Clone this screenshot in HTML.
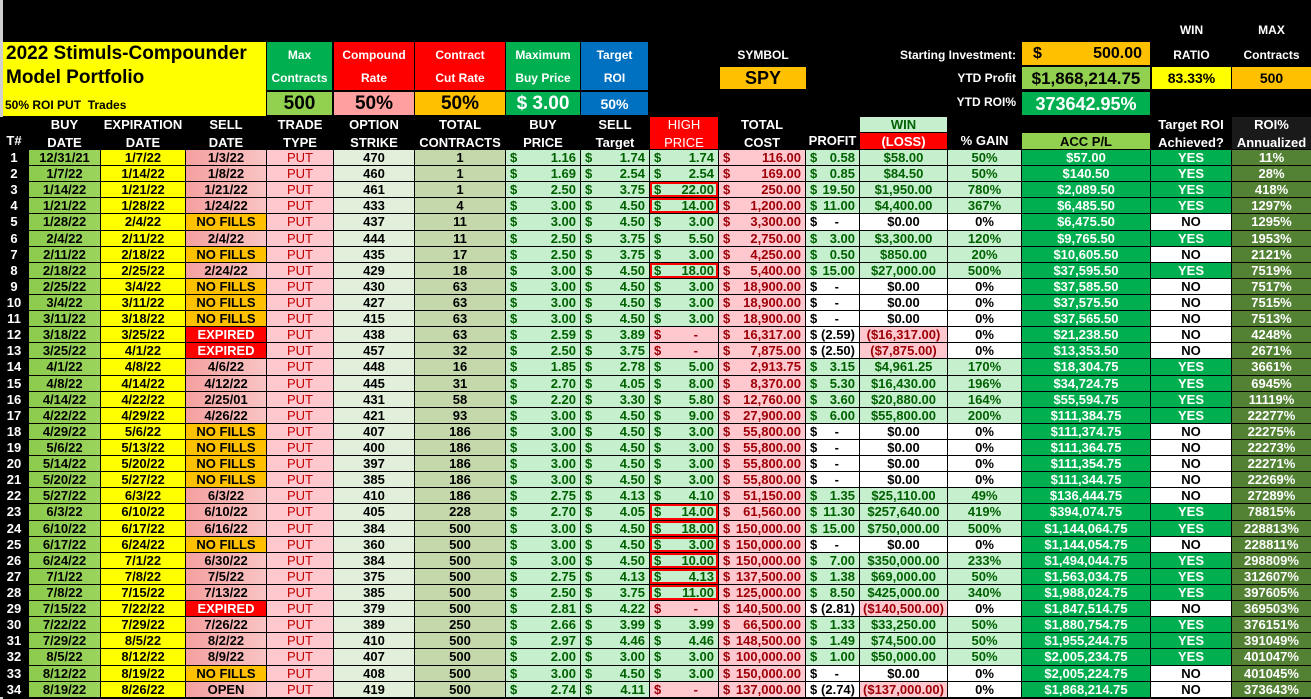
<!DOCTYPE html>
<html><head><meta charset="utf-8"><style>
*{margin:0;padding:0;box-sizing:border-box}
body{width:1311px;height:699px;background:#000;overflow:hidden;position:relative;font-family:"Liberation Sans Narrow","Liberation Sans",sans-serif;font-weight:bold;font-size:13px;color:#000}
.a{position:absolute;display:flex;align-items:center;justify-content:center;text-align:center;line-height:1}
.wt{color:#fff}
#g{position:absolute;left:0;top:117px;width:1311px;display:grid;grid-template-columns:28px 71px 84px 80px 66px 80px 90px 74px 68px 68px 86px 53px 87px 73px 128px 80px 79px;grid-template-rows:15px 16px repeat(34,15.12px);column-gap:1px;row-gap:1px;background:#000}
#g>div{display:flex;align-items:center;justify-content:center;white-space:nowrap;overflow:hidden;line-height:1}
.h{color:#fff;background:#000;flex-direction:column}
.m{justify-content:space-between!important;padding:0 4px}
.m b,.m i{font-weight:bold;font-style:normal}
.tn{color:#fff;background:#000}
.bd{background:linear-gradient(90deg,#8ccb4d,#9bd45c)}
.ex{background:#ffff00}
.sd{background:linear-gradient(90deg,#f4a09f,#f9c4c4)}
.nf{background:#ffc000}
.xp{background:#ff0000;color:#fff}
.tt{background:#ffc7ce;color:#c00000;font-weight:normal!important}
.st{background:#e2efda}
.ct{background:#c4d8ab}
.g{background:#c6efce;color:#006100}
.p{background:#ffc7ce;color:#9c0006}
.w{background:#fff;color:#000}
.ac{background:#00b050;color:#fff}
.ro{background:#548235;color:#fff}
.bx{box-shadow:inset 0 0 0 2px #ff0000}
.pd{padding-right:16px!important}
</style></head><body>
<div style="position:absolute;left:0;top:0;width:3px;height:699px;background:#d0d0d0"></div>
<!-- title -->
<div style="position:absolute;left:3px;top:42px;width:263px;height:74px;background:#ffff00"></div>
<div style="position:absolute;left:6px;top:43px;font-size:19px;line-height:22px;font-family:'Liberation Sans',sans-serif">2022 Stimuls-Compounder</div>
<div style="position:absolute;left:6px;top:67px;font-size:19px;line-height:22px;font-family:'Liberation Sans',sans-serif">Model Portfolio</div>
<div style="position:absolute;left:5px;top:98px;font-size:12px;line-height:14px">50% ROI PUT&nbsp; Trades</div>
<!-- param boxes -->
<div class="a wt" style="left:267px;top:42px;width:65px;height:48px;background:#00b050;flex-direction:column;gap:11px;font-size:12px"><span>Max</span><span>Contracts</span></div>
<div class="a wt" style="left:334px;top:42px;width:80px;height:48px;background:#ff0000;flex-direction:column;gap:11px;font-size:12px"><span>Compound</span><span>Rate</span></div>
<div class="a wt" style="left:415px;top:42px;width:90px;height:48px;background:#ff0000;flex-direction:column;gap:11px;font-size:12px"><span>Contract</span><span>Cut Rate</span></div>
<div class="a wt" style="left:506px;top:42px;width:74px;height:48px;background:#00b050;flex-direction:column;gap:11px;font-size:12px"><span>Maximum</span><span>Buy Price</span></div>
<div class="a wt" style="left:581px;top:42px;width:67px;height:48px;background:#0070c0;flex-direction:column;gap:11px;font-size:12px"><span>Target</span><span>ROI</span></div>
<div class="a" style="left:267px;top:92px;width:65px;height:23px;background:#92d050;font-size:19px">500</div>
<div class="a" style="left:334px;top:92px;width:80px;height:23px;background:#ff9f9f;font-size:19px">50%</div>
<div class="a" style="left:415px;top:92px;width:90px;height:23px;background:#ffc000;font-size:19px">50%</div>
<div class="a wt" style="left:506px;top:92px;width:74px;height:23px;background:#00b050;font-size:19px">$ 3.00</div>
<div class="a wt" style="left:581px;top:92px;width:67px;height:23px;background:#0070c0;font-size:14px">50%</div>
<!-- right top -->
<div class="a wt" style="left:720px;top:48px;width:86px;height:14px;font-size:12px">SYMBOL</div>
<div class="a" style="left:720px;top:67px;width:86px;height:22px;background:#ffc000;font-size:18px;font-family:'Liberation Sans',sans-serif">SPY</div>
<div class="a wt" style="left:880px;top:48px;width:136px;height:14px;font-size:12px;justify-content:flex-end">Starting Investment:</div>
<div class="a wt" style="left:880px;top:71px;width:136px;height:14px;font-size:12px;justify-content:flex-end">YTD Profit</div>
<div class="a wt" style="left:880px;top:95px;width:136px;height:14px;font-size:12px;justify-content:flex-end">YTD ROI%</div>
<div class="a" style="left:1022px;top:42px;width:128px;height:23px;background:#ffc000;font-size:16px;justify-content:space-between;padding:0 8px 0 11px"><span>$</span><span>500.00</span></div>
<div class="a" style="left:1022px;top:67px;width:128px;height:22px;background:#92d050;font-size:17px">$1,868,214.75</div>
<div class="a wt" style="left:1022px;top:92px;width:128px;height:23px;background:#00b050;font-size:18px">373642.95%</div>
<div class="a wt" style="left:1152px;top:23px;width:79px;height:14px;font-size:12px">WIN</div>
<div class="a wt" style="left:1152px;top:48px;width:79px;height:14px;font-size:12px">RATIO</div>
<div class="a wt" style="left:1232px;top:23px;width:79px;height:14px;font-size:12px">MAX</div>
<div class="a wt" style="left:1232px;top:48px;width:79px;height:14px;font-size:12px">Contracts</div>
<div class="a" style="left:1152px;top:67px;width:79px;height:22px;background:#ffff00;font-size:14px">83.33%</div>
<div class="a" style="left:1232px;top:67px;width:79px;height:22px;background:#ffc000;font-size:14px">500</div>

<div id="g">
<div class="h" style="grid-row:1/3;justify-content:flex-end;padding-bottom:2px">T#</div>
<div class="h" style="grid-row:1/3;gap:5px"><span>BUY</span><span>DATE</span></div>
<div class="h" style="grid-row:1/3;gap:5px"><span>EXPIRATION</span><span>DATE</span></div>
<div class="h" style="grid-row:1/3;gap:5px"><span>SELL</span><span>DATE</span></div>
<div class="h" style="grid-row:1/3;gap:5px"><span>TRADE</span><span>TYPE</span></div>
<div class="h" style="grid-row:1/3;gap:5px"><span>OPTION</span><span>STRIKE</span></div>
<div class="h" style="grid-row:1/3;gap:5px"><span>TOTAL</span><span>CONTRACTS</span></div>
<div class="h" style="grid-row:1/3;gap:5px"><span>BUY</span><span>PRICE</span></div>
<div class="h" style="grid-row:1/3;gap:5px"><span>SELL</span><span>Target</span></div>
<div class="h" style="grid-row:1/3;gap:5px;background:#ff0000;font-weight:normal"><span>HIGH</span><span>PRICE</span></div>
<div class="h" style="grid-row:1/3;gap:5px"><span>TOTAL</span><span>COST</span></div>
<div class="h" style="grid-row:1/3;justify-content:flex-end;padding-bottom:2px">PROFIT</div>
<div style="grid-row:1;background:#c6efce;color:#006100">WIN</div>
<div class="h" style="grid-row:1/3;justify-content:flex-end;padding-bottom:2px">% GAIN</div>
<div class="h" style="grid-row:1"></div>
<div class="h" style="grid-row:1/3;gap:5px"><span>Target ROI</span><span>Achieved?</span></div>
<div class="h" style="grid-row:1/3;gap:5px;background:#1a1a1a"><span>ROI%</span><span>Annualized</span></div>
<div style="grid-row:2;grid-column:13;background:#ff0000;color:#fff">(LOSS)</div>
<div style="grid-row:2;grid-column:15;background:#92d050">ACC P/L</div>

<div class="tn">1</div><div class="bd">12/31/21</div><div class="ex">1/7/22</div><div class="sd">1/3/22</div><div class="tt">PUT</div><div class="st">470</div><div class="ct">1</div><div class="g m"><b>$</b><i>1.16</i></div><div class="g m"><b>$</b><i>1.74</i></div><div class="g m"><b>$</b><i>1.74</i></div><div class="p m"><b>$</b><i>116.00</i></div><div class="g m"><b>$</b><i>0.58</i></div><div class="g">$58.00</div><div class="g">50%</div><div class="ac">$57.00</div><div class="ac">YES</div><div class="ro">11%</div>
<div class="tn">2</div><div class="bd">1/7/22</div><div class="ex">1/14/22</div><div class="sd">1/8/22</div><div class="tt">PUT</div><div class="st">460</div><div class="ct">1</div><div class="g m"><b>$</b><i>1.69</i></div><div class="g m"><b>$</b><i>2.54</i></div><div class="g m"><b>$</b><i>2.54</i></div><div class="p m"><b>$</b><i>169.00</i></div><div class="g m"><b>$</b><i>0.85</i></div><div class="g">$84.50</div><div class="g">50%</div><div class="ac">$140.50</div><div class="ac">YES</div><div class="ro">28%</div>
<div class="tn">3</div><div class="bd">1/14/22</div><div class="ex">1/21/22</div><div class="sd">1/21/22</div><div class="tt">PUT</div><div class="st">461</div><div class="ct">1</div><div class="g m"><b>$</b><i>2.50</i></div><div class="g m"><b>$</b><i>3.75</i></div><div class="g m bx"><b>$</b><i>22.00</i></div><div class="p m"><b>$</b><i>250.00</i></div><div class="g m"><b>$</b><i>19.50</i></div><div class="g">$1,950.00</div><div class="g">780%</div><div class="ac">$2,089.50</div><div class="ac">YES</div><div class="ro">418%</div>
<div class="tn">4</div><div class="bd">1/21/22</div><div class="ex">1/28/22</div><div class="sd">1/24/22</div><div class="tt">PUT</div><div class="st">433</div><div class="ct">4</div><div class="g m"><b>$</b><i>3.00</i></div><div class="g m"><b>$</b><i>4.50</i></div><div class="g m bx"><b>$</b><i>14.00</i></div><div class="p m"><b>$</b><i>1,200.00</i></div><div class="g m"><b>$</b><i>11.00</i></div><div class="g">$4,400.00</div><div class="g">367%</div><div class="ac">$6,485.50</div><div class="ac">YES</div><div class="ro">1297%</div>
<div class="tn">5</div><div class="bd">1/28/22</div><div class="ex">2/4/22</div><div class="nf">NO FILLS</div><div class="tt">PUT</div><div class="st">437</div><div class="ct">11</div><div class="g m"><b>$</b><i>3.00</i></div><div class="g m"><b>$</b><i>4.50</i></div><div class="g m"><b>$</b><i>3.00</i></div><div class="p m"><b>$</b><i>3,300.00</i></div><div class="w m"><b>$</b><i class="pd">-</i></div><div class="w">$0.00</div><div class="w">0%</div><div class="ac">$6,475.50</div><div class="w">NO</div><div class="ro">1295%</div>
<div class="tn">6</div><div class="bd">2/4/22</div><div class="ex">2/11/22</div><div class="sd">2/4/22</div><div class="tt">PUT</div><div class="st">444</div><div class="ct">11</div><div class="g m"><b>$</b><i>2.50</i></div><div class="g m"><b>$</b><i>3.75</i></div><div class="g m"><b>$</b><i>5.50</i></div><div class="p m"><b>$</b><i>2,750.00</i></div><div class="g m"><b>$</b><i>3.00</i></div><div class="g">$3,300.00</div><div class="g">120%</div><div class="ac">$9,765.50</div><div class="ac">YES</div><div class="ro">1953%</div>
<div class="tn">7</div><div class="bd">2/11/22</div><div class="ex">2/18/22</div><div class="nf">NO FILLS</div><div class="tt">PUT</div><div class="st">435</div><div class="ct">17</div><div class="g m"><b>$</b><i>2.50</i></div><div class="g m"><b>$</b><i>3.75</i></div><div class="g m"><b>$</b><i>3.00</i></div><div class="p m"><b>$</b><i>4,250.00</i></div><div class="g m"><b>$</b><i>0.50</i></div><div class="g">$850.00</div><div class="g">20%</div><div class="ac">$10,605.50</div><div class="w">NO</div><div class="ro">2121%</div>
<div class="tn">8</div><div class="bd">2/18/22</div><div class="ex">2/25/22</div><div class="sd">2/24/22</div><div class="tt">PUT</div><div class="st">429</div><div class="ct">18</div><div class="g m"><b>$</b><i>3.00</i></div><div class="g m"><b>$</b><i>4.50</i></div><div class="g m bx"><b>$</b><i>18.00</i></div><div class="p m"><b>$</b><i>5,400.00</i></div><div class="g m"><b>$</b><i>15.00</i></div><div class="g">$27,000.00</div><div class="g">500%</div><div class="ac">$37,595.50</div><div class="ac">YES</div><div class="ro">7519%</div>
<div class="tn">9</div><div class="bd">2/25/22</div><div class="ex">3/4/22</div><div class="nf">NO FILLS</div><div class="tt">PUT</div><div class="st">430</div><div class="ct">63</div><div class="g m"><b>$</b><i>3.00</i></div><div class="g m"><b>$</b><i>4.50</i></div><div class="g m"><b>$</b><i>3.00</i></div><div class="p m"><b>$</b><i>18,900.00</i></div><div class="w m"><b>$</b><i class="pd">-</i></div><div class="w">$0.00</div><div class="w">0%</div><div class="ac">$37,585.50</div><div class="w">NO</div><div class="ro">7517%</div>
<div class="tn">10</div><div class="bd">3/4/22</div><div class="ex">3/11/22</div><div class="nf">NO FILLS</div><div class="tt">PUT</div><div class="st">427</div><div class="ct">63</div><div class="g m"><b>$</b><i>3.00</i></div><div class="g m"><b>$</b><i>4.50</i></div><div class="g m"><b>$</b><i>3.00</i></div><div class="p m"><b>$</b><i>18,900.00</i></div><div class="w m"><b>$</b><i class="pd">-</i></div><div class="w">$0.00</div><div class="w">0%</div><div class="ac">$37,575.50</div><div class="w">NO</div><div class="ro">7515%</div>
<div class="tn">11</div><div class="bd">3/11/22</div><div class="ex">3/18/22</div><div class="nf">NO FILLS</div><div class="tt">PUT</div><div class="st">415</div><div class="ct">63</div><div class="g m"><b>$</b><i>3.00</i></div><div class="g m"><b>$</b><i>4.50</i></div><div class="g m"><b>$</b><i>3.00</i></div><div class="p m"><b>$</b><i>18,900.00</i></div><div class="w m"><b>$</b><i class="pd">-</i></div><div class="w">$0.00</div><div class="w">0%</div><div class="ac">$37,565.50</div><div class="w">NO</div><div class="ro">7513%</div>
<div class="tn">12</div><div class="bd">3/18/22</div><div class="ex">3/25/22</div><div class="xp">EXPIRED</div><div class="tt">PUT</div><div class="st">438</div><div class="ct">63</div><div class="g m"><b>$</b><i>2.59</i></div><div class="g m"><b>$</b><i>3.89</i></div><div class="p m"><b>$</b><i class="pd">-</i></div><div class="p m"><b>$</b><i>16,317.00</i></div><div class="w m"><b>$</b><i>(2.59)</i></div><div class="p">($16,317.00)</div><div class="w">0%</div><div class="ac">$21,238.50</div><div class="w">NO</div><div class="ro">4248%</div>
<div class="tn">13</div><div class="bd">3/25/22</div><div class="ex">4/1/22</div><div class="xp">EXPIRED</div><div class="tt">PUT</div><div class="st">457</div><div class="ct">32</div><div class="g m"><b>$</b><i>2.50</i></div><div class="g m"><b>$</b><i>3.75</i></div><div class="p m"><b>$</b><i class="pd">-</i></div><div class="p m"><b>$</b><i>7,875.00</i></div><div class="w m"><b>$</b><i>(2.50)</i></div><div class="p">($7,875.00)</div><div class="w">0%</div><div class="ac">$13,353.50</div><div class="w">NO</div><div class="ro">2671%</div>
<div class="tn">14</div><div class="bd">4/1/22</div><div class="ex">4/8/22</div><div class="sd">4/6/22</div><div class="tt">PUT</div><div class="st">448</div><div class="ct">16</div><div class="g m"><b>$</b><i>1.85</i></div><div class="g m"><b>$</b><i>2.78</i></div><div class="g m"><b>$</b><i>5.00</i></div><div class="p m"><b>$</b><i>2,913.75</i></div><div class="g m"><b>$</b><i>3.15</i></div><div class="g">$4,961.25</div><div class="g">170%</div><div class="ac">$18,304.75</div><div class="ac">YES</div><div class="ro">3661%</div>
<div class="tn">15</div><div class="bd">4/8/22</div><div class="ex">4/14/22</div><div class="sd">4/12/22</div><div class="tt">PUT</div><div class="st">445</div><div class="ct">31</div><div class="g m"><b>$</b><i>2.70</i></div><div class="g m"><b>$</b><i>4.05</i></div><div class="g m"><b>$</b><i>8.00</i></div><div class="p m"><b>$</b><i>8,370.00</i></div><div class="g m"><b>$</b><i>5.30</i></div><div class="g">$16,430.00</div><div class="g">196%</div><div class="ac">$34,724.75</div><div class="ac">YES</div><div class="ro">6945%</div>
<div class="tn">16</div><div class="bd">4/14/22</div><div class="ex">4/22/22</div><div class="sd">2/25/01</div><div class="tt">PUT</div><div class="st">431</div><div class="ct">58</div><div class="g m"><b>$</b><i>2.20</i></div><div class="g m"><b>$</b><i>3.30</i></div><div class="g m"><b>$</b><i>5.80</i></div><div class="p m"><b>$</b><i>12,760.00</i></div><div class="g m"><b>$</b><i>3.60</i></div><div class="g">$20,880.00</div><div class="g">164%</div><div class="ac">$55,594.75</div><div class="ac">YES</div><div class="ro">11119%</div>
<div class="tn">17</div><div class="bd">4/22/22</div><div class="ex">4/29/22</div><div class="sd">4/26/22</div><div class="tt">PUT</div><div class="st">421</div><div class="ct">93</div><div class="g m"><b>$</b><i>3.00</i></div><div class="g m"><b>$</b><i>4.50</i></div><div class="g m"><b>$</b><i>9.00</i></div><div class="p m"><b>$</b><i>27,900.00</i></div><div class="g m"><b>$</b><i>6.00</i></div><div class="g">$55,800.00</div><div class="g">200%</div><div class="ac">$111,384.75</div><div class="ac">YES</div><div class="ro">22277%</div>
<div class="tn">18</div><div class="bd">4/29/22</div><div class="ex">5/6/22</div><div class="nf">NO FILLS</div><div class="tt">PUT</div><div class="st">407</div><div class="ct">186</div><div class="g m"><b>$</b><i>3.00</i></div><div class="g m"><b>$</b><i>4.50</i></div><div class="g m"><b>$</b><i>3.00</i></div><div class="p m"><b>$</b><i>55,800.00</i></div><div class="w m"><b>$</b><i class="pd">-</i></div><div class="w">$0.00</div><div class="w">0%</div><div class="ac">$111,374.75</div><div class="w">NO</div><div class="ro">22275%</div>
<div class="tn">19</div><div class="bd">5/6/22</div><div class="ex">5/13/22</div><div class="nf">NO FILLS</div><div class="tt">PUT</div><div class="st">400</div><div class="ct">186</div><div class="g m"><b>$</b><i>3.00</i></div><div class="g m"><b>$</b><i>4.50</i></div><div class="g m"><b>$</b><i>3.00</i></div><div class="p m"><b>$</b><i>55,800.00</i></div><div class="w m"><b>$</b><i class="pd">-</i></div><div class="w">$0.00</div><div class="w">0%</div><div class="ac">$111,364.75</div><div class="w">NO</div><div class="ro">22273%</div>
<div class="tn">20</div><div class="bd">5/14/22</div><div class="ex">5/20/22</div><div class="nf">NO FILLS</div><div class="tt">PUT</div><div class="st">397</div><div class="ct">186</div><div class="g m"><b>$</b><i>3.00</i></div><div class="g m"><b>$</b><i>4.50</i></div><div class="g m"><b>$</b><i>3.00</i></div><div class="p m"><b>$</b><i>55,800.00</i></div><div class="w m"><b>$</b><i class="pd">-</i></div><div class="w">$0.00</div><div class="w">0%</div><div class="ac">$111,354.75</div><div class="w">NO</div><div class="ro">22271%</div>
<div class="tn">21</div><div class="bd">5/20/22</div><div class="ex">5/27/22</div><div class="nf">NO FILLS</div><div class="tt">PUT</div><div class="st">385</div><div class="ct">186</div><div class="g m"><b>$</b><i>3.00</i></div><div class="g m"><b>$</b><i>4.50</i></div><div class="g m"><b>$</b><i>3.00</i></div><div class="p m"><b>$</b><i>55,800.00</i></div><div class="w m"><b>$</b><i class="pd">-</i></div><div class="w">$0.00</div><div class="w">0%</div><div class="ac">$111,344.75</div><div class="w">NO</div><div class="ro">22269%</div>
<div class="tn">22</div><div class="bd">5/27/22</div><div class="ex">6/3/22</div><div class="sd">6/3/22</div><div class="tt">PUT</div><div class="st">410</div><div class="ct">186</div><div class="g m"><b>$</b><i>2.75</i></div><div class="g m"><b>$</b><i>4.13</i></div><div class="g m"><b>$</b><i>4.10</i></div><div class="p m"><b>$</b><i>51,150.00</i></div><div class="g m"><b>$</b><i>1.35</i></div><div class="g">$25,110.00</div><div class="g">49%</div><div class="ac">$136,444.75</div><div class="w">NO</div><div class="ro">27289%</div>
<div class="tn">23</div><div class="bd">6/3/22</div><div class="ex">6/10/22</div><div class="sd">6/10/22</div><div class="tt">PUT</div><div class="st">405</div><div class="ct">228</div><div class="g m"><b>$</b><i>2.70</i></div><div class="g m"><b>$</b><i>4.05</i></div><div class="g m bx"><b>$</b><i>14.00</i></div><div class="p m"><b>$</b><i>61,560.00</i></div><div class="g m"><b>$</b><i>11.30</i></div><div class="g">$257,640.00</div><div class="g">419%</div><div class="ac">$394,074.75</div><div class="ac">YES</div><div class="ro">78815%</div>
<div class="tn">24</div><div class="bd">6/10/22</div><div class="ex">6/17/22</div><div class="sd">6/16/22</div><div class="tt">PUT</div><div class="st">384</div><div class="ct">500</div><div class="g m"><b>$</b><i>3.00</i></div><div class="g m"><b>$</b><i>4.50</i></div><div class="g m bx"><b>$</b><i>18.00</i></div><div class="p m"><b>$</b><i>150,000.00</i></div><div class="g m"><b>$</b><i>15.00</i></div><div class="g">$750,000.00</div><div class="g">500%</div><div class="ac">$1,144,064.75</div><div class="ac">YES</div><div class="ro">228813%</div>
<div class="tn">25</div><div class="bd">6/17/22</div><div class="ex">6/24/22</div><div class="nf">NO FILLS</div><div class="tt">PUT</div><div class="st">360</div><div class="ct">500</div><div class="g m"><b>$</b><i>3.00</i></div><div class="g m"><b>$</b><i>4.50</i></div><div class="g m bx"><b>$</b><i>3.00</i></div><div class="p m"><b>$</b><i>150,000.00</i></div><div class="w m"><b>$</b><i class="pd">-</i></div><div class="w">$0.00</div><div class="w">0%</div><div class="ac">$1,144,054.75</div><div class="w">NO</div><div class="ro">228811%</div>
<div class="tn">26</div><div class="bd">6/24/22</div><div class="ex">7/1/22</div><div class="sd">6/30/22</div><div class="tt">PUT</div><div class="st">384</div><div class="ct">500</div><div class="g m"><b>$</b><i>3.00</i></div><div class="g m"><b>$</b><i>4.50</i></div><div class="g m bx"><b>$</b><i>10.00</i></div><div class="p m"><b>$</b><i>150,000.00</i></div><div class="g m"><b>$</b><i>7.00</i></div><div class="g">$350,000.00</div><div class="g">233%</div><div class="ac">$1,494,044.75</div><div class="ac">YES</div><div class="ro">298809%</div>
<div class="tn">27</div><div class="bd">7/1/22</div><div class="ex">7/8/22</div><div class="sd">7/5/22</div><div class="tt">PUT</div><div class="st">375</div><div class="ct">500</div><div class="g m"><b>$</b><i>2.75</i></div><div class="g m"><b>$</b><i>4.13</i></div><div class="g m bx"><b>$</b><i>4.13</i></div><div class="p m"><b>$</b><i>137,500.00</i></div><div class="g m"><b>$</b><i>1.38</i></div><div class="g">$69,000.00</div><div class="g">50%</div><div class="ac">$1,563,034.75</div><div class="ac">YES</div><div class="ro">312607%</div>
<div class="tn">28</div><div class="bd">7/8/22</div><div class="ex">7/15/22</div><div class="sd">7/13/22</div><div class="tt">PUT</div><div class="st">385</div><div class="ct">500</div><div class="g m"><b>$</b><i>2.50</i></div><div class="g m"><b>$</b><i>3.75</i></div><div class="g m bx"><b>$</b><i>11.00</i></div><div class="p m"><b>$</b><i>125,000.00</i></div><div class="g m"><b>$</b><i>8.50</i></div><div class="g">$425,000.00</div><div class="g">340%</div><div class="ac">$1,988,024.75</div><div class="ac">YES</div><div class="ro">397605%</div>
<div class="tn">29</div><div class="bd">7/15/22</div><div class="ex">7/22/22</div><div class="xp">EXPIRED</div><div class="tt">PUT</div><div class="st">379</div><div class="ct">500</div><div class="g m"><b>$</b><i>2.81</i></div><div class="g m"><b>$</b><i>4.22</i></div><div class="p m"><b>$</b><i class="pd">-</i></div><div class="p m"><b>$</b><i>140,500.00</i></div><div class="w m"><b>$</b><i>(2.81)</i></div><div class="p">($140,500.00)</div><div class="w">0%</div><div class="ac">$1,847,514.75</div><div class="w">NO</div><div class="ro">369503%</div>
<div class="tn">30</div><div class="bd">7/22/22</div><div class="ex">7/29/22</div><div class="sd">7/26/22</div><div class="tt">PUT</div><div class="st">389</div><div class="ct">250</div><div class="g m"><b>$</b><i>2.66</i></div><div class="g m"><b>$</b><i>3.99</i></div><div class="g m"><b>$</b><i>3.99</i></div><div class="p m"><b>$</b><i>66,500.00</i></div><div class="g m"><b>$</b><i>1.33</i></div><div class="g">$33,250.00</div><div class="g">50%</div><div class="ac">$1,880,754.75</div><div class="ac">YES</div><div class="ro">376151%</div>
<div class="tn">31</div><div class="bd">7/29/22</div><div class="ex">8/5/22</div><div class="sd">8/2/22</div><div class="tt">PUT</div><div class="st">410</div><div class="ct">500</div><div class="g m"><b>$</b><i>2.97</i></div><div class="g m"><b>$</b><i>4.46</i></div><div class="g m"><b>$</b><i>4.46</i></div><div class="p m"><b>$</b><i>148,500.00</i></div><div class="g m"><b>$</b><i>1.49</i></div><div class="g">$74,500.00</div><div class="g">50%</div><div class="ac">$1,955,244.75</div><div class="ac">YES</div><div class="ro">391049%</div>
<div class="tn">32</div><div class="bd">8/5/22</div><div class="ex">8/12/22</div><div class="sd">8/9/22</div><div class="tt">PUT</div><div class="st">407</div><div class="ct">500</div><div class="g m"><b>$</b><i>2.00</i></div><div class="g m"><b>$</b><i>3.00</i></div><div class="g m"><b>$</b><i>3.00</i></div><div class="p m"><b>$</b><i>100,000.00</i></div><div class="g m"><b>$</b><i>1.00</i></div><div class="g">$50,000.00</div><div class="g">50%</div><div class="ac">$2,005,234.75</div><div class="ac">YES</div><div class="ro">401047%</div>
<div class="tn">33</div><div class="bd">8/12/22</div><div class="ex">8/19/22</div><div class="nf">NO FILLS</div><div class="tt">PUT</div><div class="st">408</div><div class="ct">500</div><div class="g m"><b>$</b><i>3.00</i></div><div class="g m"><b>$</b><i>4.50</i></div><div class="g m"><b>$</b><i>3.00</i></div><div class="p m"><b>$</b><i>150,000.00</i></div><div class="w m"><b>$</b><i class="pd">-</i></div><div class="w">$0.00</div><div class="w">0%</div><div class="ac">$2,005,224.75</div><div class="w">NO</div><div class="ro">401045%</div>
<div class="tn">34</div><div class="bd">8/19/22</div><div class="ex">8/26/22</div><div class="sd">OPEN</div><div class="tt">PUT</div><div class="st">419</div><div class="ct">500</div><div class="g m"><b>$</b><i>2.74</i></div><div class="g m"><b>$</b><i>4.11</i></div><div class="p m"><b>$</b><i class="pd">-</i></div><div class="p m"><b>$</b><i>137,000.00</i></div><div class="w m"><b>$</b><i>(2.74)</i></div><div class="p">($137,000.00)</div><div class="w">0%</div><div class="ac">$1,868,214.75</div><div class="w">NO</div><div class="ro">373643%</div>
</div>
</body></html>
